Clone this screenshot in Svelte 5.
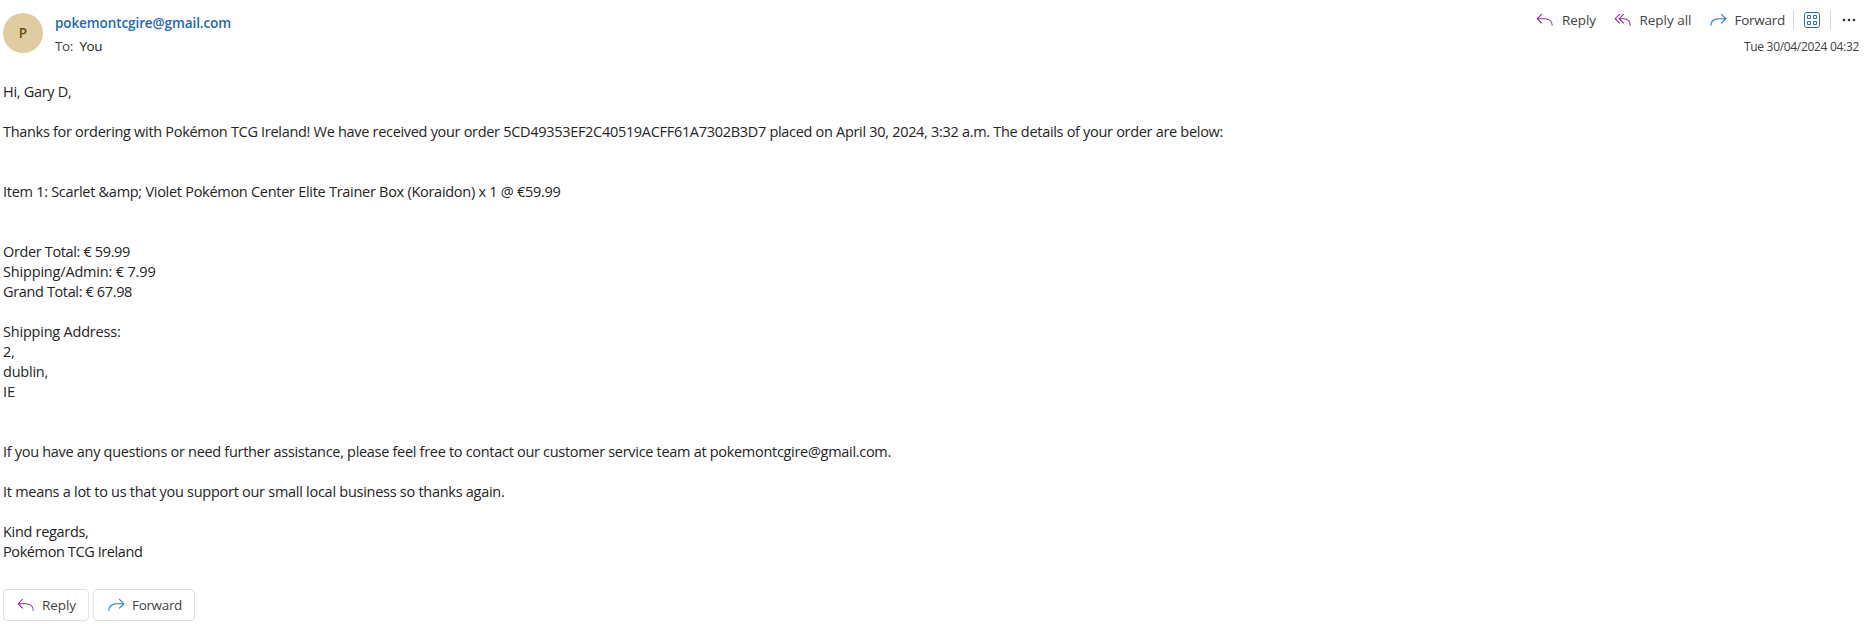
<script>
  // Adjusts tracking so that a run of text fills the given measure.
  function fit(node, width) {
    const natural = node.getBoundingClientRect().width;
    const count = [...node.textContent].length;
    node.style.letterSpacing = `${(width - natural) / count}px`;
  }

  const lines = [
    ['Hi, Gary D,', 68.5],
    null,
    ['Thanks for ordering with Pokémon TCG Ireland! We have received your order 5CD49353EF2C40519ACFF61A7302B3D7 placed on April 30, 2024, 3:32 a.m. The details of your order are below:', 1220],
    null,
    null,
    ['Item 1: Scarlet &amp; Violet Pokémon Center Elite Trainer Box (Koraidon) x 1 @ €59.99', 557.5],
    null,
    null,
    ['Order Total: € 59.99', 127],
    ['Shipping/Admin: € 7.99', 152.5],
    ['Grand Total: € 67.98', 129],
    null,
    ['Shipping Address:', 117.5],
    ['2,', 11.5],
    ['dublin,', 45],
    ['IE', 12],
    null,
    null,
    ['If you have any questions or need further assistance, please feel free to contact our customer service team at pokemontcgire@gmail.com.', 888],
    null,
    ['It means a lot to us that you support our small local business so thanks again.', 501.5],
    null,
    ['Kind regards,', 85.5],
    ['Pokémon TCG Ireland', 139.5],
  ];
</script>

{#snippet replyIcon()}
  <svg class="icon purple" width="18" height="14" viewBox="0 0 18 14"><path d="M5.8 1.2 1.2 5.7l4.6 4.6M1.4 5.7H8.5c4.4 0 7.8 2.5 7.8 7" /></svg>
{/snippet}

{#snippet forwardIcon()}
  <svg class="icon blue" width="18" height="14" viewBox="0 0 18 14"><path d="m12.2 1.2 4.6 4.5-4.6 4.6M16.6 5.7H9.5c-4.4 0-7.8 2.5-7.8 7" /></svg>
{/snippet}

<main>
  <header>
    <div class="avatar">P</div>
    <div class="sender">
      <div class="from"><span use:fit={176}>pokemontcgire@gmail.com</span></div>
      <div class="to"><span class="label"><span use:fit={18}>To:</span></span><span use:fit={22.5}>You</span></div>
    </div>
    <div class="side">
      <div class="toolbar">
        <button class="reply">{@render replyIcon()}<span use:fit={34}>Reply</span></button>
        <button class="all">
          <svg class="icon purple" width="18" height="14" viewBox="0 0 18 14"><path d="M5.8 1.2 1.2 5.7l4.6 4.6M9.8 1.2 5.2 5.7l4.6 4.6M5.4 5.7h4.1c4.1 0 6.8 2.5 6.8 7" /></svg>
          <span use:fit={52}>Reply all</span>
        </button>
        <button class="forward">{@render forwardIcon()}<span use:fit={50.5}>Forward</span></button>
        <i class="sep"></i>
        <svg class="apps" width="16" height="16" viewBox="0 0 16 16">
          <rect x=".5" y=".5" width="15" height="15" rx="2.2" />
          <path d="M3.5 3.5h3v3h-3zM9.5 3.5h3v3h-3zM3.5 9.5h3v3h-3zM9.5 9.5h3v3h-3z" />
        </svg>
        <i class="sep"></i>
        <svg class="more" width="14" height="4" viewBox="0 0 14 4"><circle cx="2" cy="2" r="1.3" /><circle cx="7" cy="2" r="1.3" /><circle cx="12" cy="2" r="1.3" /></svg>
      </div>
      <div class="date"><span use:fit={115}>Tue 30/04/2024 04:32</span></div>
    </div>
  </header>

  <article>
    {#each lines as line}
      <div class="line">{#if line}<span use:fit={line[1]}>{line[0]}</span>{/if}</div>
    {/each}
  </article>

  <footer>
    <button class="r">{@render replyIcon()}<span use:fit={34}>Reply</span></button>
    <button class="f">{@render forwardIcon()}<span use:fit={50}>Forward</span></button>
  </footer>
</main>

<style>
  :global(body) {
    margin: 0;
    background: #fff;
  }
  main {
    width: 1876px;
    height: 624px;
    box-sizing: border-box;
    overflow: hidden;
    padding-left: 3px;
    background: #fff;
    color: #242424;
    font-family: "Open Sans", "Noto Sans", sans-serif;
    font-size: 14.5px;
    white-space: nowrap;
  }
  header {
    display: flex;
    height: 82px;
    padding: 0 17px 0 0;
    box-sizing: border-box;
  }
  .avatar {
    width: 40px;
    height: 40px;
    margin-top: 13px;
    border-radius: 50%;
    background: #dfcca0;
    color: #6b4c08;
    font-size: 13.5px;
    font-weight: 600;
    line-height: 40px;
    text-align: center;
  }
  .sender {
    margin: 13px 0 0 12px;
  }
  .from {
    height: 21px;
    line-height: 21px;
    color: #1d68bd;
    font-size: 13.5px;
    font-weight: 600;
  }
  .to {
    display: flex;
    height: 24px;
    line-height: 25px;
    font-size: 13.5px;
  }
  .label {
    width: 24.5px;
    color: #424242;
  }
  .side {
    margin-left: auto;
  }
  .toolbar {
    display: flex;
    align-items: center;
    justify-content: flex-end;
    height: 40px;
  }
  button {
    display: flex;
    align-items: center;
    padding: 0;
    border: 0;
    background: none;
    color: #424242;
    font-family: inherit;
    font-size: 13.5px;
    line-height: 20px;
    white-space: nowrap;
  }
  .icon {
    fill: none;
    stroke-width: 1.1;
    flex: none;
  }
  .purple {
    stroke: #8b2f96;
  }
  .blue {
    stroke: #1f78cc;
  }
  .toolbar .icon {
    margin-right: 8px;
  }
  .all {
    margin-left: 17.5px;
  }
  .forward {
    margin-left: 17px;
  }
  .sep {
    width: 1px;
    height: 20px;
    margin-left: 8px;
    background: #d6d6d6;
  }
  .apps {
    margin: 0 2px 0 10px;
    fill: none;
    stroke: #2b6dbd;
  }
  .more {
    margin: 0 3px 0 11px;
    fill: #333;
  }
  .date {
    height: 16px;
    line-height: 14px;
    text-align: right;
    font-size: 12px;
    color: #424242;
  }
  .line {
    height: 20px;
    line-height: 20px;
  }
  footer {
    display: flex;
    gap: 4px;
    padding: 27px 0 0;
  }
  footer button {
    height: 32px;
    box-sizing: border-box;
    border: 1px solid #e0e0e0;
    border-radius: 4px;
    padding-left: 13px;
  }
  footer .icon {
    margin-right: 7px;
  }
  .r {
    width: 86px;
  }
  .f {
    width: 102px;
  }
</style>
